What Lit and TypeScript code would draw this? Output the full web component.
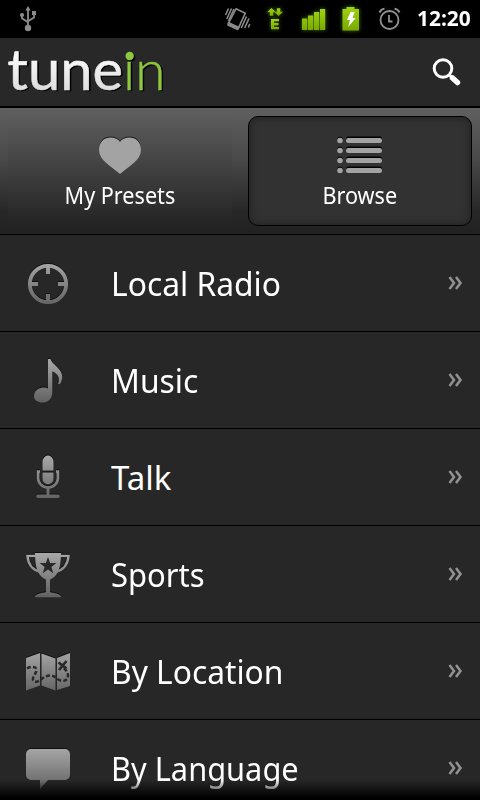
import { LitElement, html, svg, css } from "lit";
import { customElement } from "lit/decorators.js";

const rowGlyphs = {
  target: svg`
    <circle cx="24" cy="24" r="18.2" fill="none" stroke="url(#g)" stroke-width="3.8"/>
    <path d="M22 7h4v7h-4zM22 34h4v7h-4zM7 22h7v4h-7zM34 22h7v4h-7z" fill="url(#g)"/>`,
  note: svg`<path fill="url(#g)" d="M24 2h2.400c1.500 5.500 11.800 9.500 11.800 17.500c0 3-1 5.800-2.400 7.700l-1.600-.5c2.500-7-1.500-10.500-5.900-12.400V35c0 6.500-4.300 10.500-9.600 10.500c-5 0-8.700-2.200-8.700-6.500c0-5 4.500-8.500 9.400-8.500c1.800 0 3.400.3 4.600.9z"/>`,
  mic: svg`
    <path fill="url(#g)" d="M18.500 16.500V8a5.500 6.500 0 0 1 11 0v8.500zM18.500 18.500h11v6a5.500 5.800 0 0 1-11 0z"/>
    <path fill="none" stroke="url(#g)" stroke-width="2.600" d="M16 17.500h-1.900v6.500a9.900 9.500 0 0 0 19.800 0v-6.500h-1.900"/>
    <path fill="url(#g)" d="M22.500 33h3v7.500h8.500a1.800 1.800 0 0 1 0 3.600h-20a1.800 1.800 0 0 1 0-3.600h8.500z"/>`,
  cup: svg`
    <path fill="none" stroke="url(#g)" stroke-width="2.400" d="M12 4.900H3.500C4 12.500 8 19 16 20.500M36 4.900h8.500C44 12.500 40 19 32 20.500"/>
    <path fill="url(#g)" d="M11 2h26v2c-.4 9-1.500 16-5 20c-2 2.500-4.500 4-6 4.500V41c3 1.400 10 .8 11.500 5.200h-27C12 41.800 19 42.400 22 41V28.500c-1.500-.5-4-2-6-4.500c-3.500-4-4.600-11-5-20z"/>
    <path fill="#282828" d="M24 6l2.100 6h6.300l-5 3.900l1.800 6.300l-5.200-3.700l-5.200 3.700l1.800-6.300l-5-3.900h6.300z"/>`,
  map: svg`
    <path fill="url(#g)" d="M2 10l14-5v32.500L2 42.400zM17.500 5.500l14 5v32l-14-5.100zM33 10l13-5v33L33 42z"/>
    <path fill="none" stroke="#282828" stroke-width="2.500" stroke-dasharray="4 2.200" d="M3 20.500c3-2 9-2.500 9.500 1s-4.500 7-3.500 10.500c1.500 3.500 6 1 8-.5c5-4.500 11-5.500 16-1c4 4 11 3 11-3c0-3-2.500-6.500-5.500-8"/>
    <path stroke="#282828" stroke-width="2.700" d="M34.500 14.500l8 6M42.500 13l-7.500 9"/>`,
  bubble: svg`<path fill="url(#g)" d="M7 4h34a5 5 0 0 1 5 5v21a5 5 0 0 1-5 5H24l-8 9v-9H7a5 5 0 0 1-5-5V9a5 5 0 0 1 5-5z"/>`,
};

const categories: [keyof typeof rowGlyphs, string, number][] = [
  ["target", "Local Radio", 0.963],
  ["note", "Music", 0.965],
  ["mic", "Talk", 1.0],
  ["cup", "Sports", 0.938],
  ["map", "By Location", 0.962],
  ["bubble", "By Language", 0.933],
];

@customElement("status-bar")
class StatusBar extends LitElement {
  static styles = css`
    :host { display: flex; align-items: center; height: 38px; background: #000; position: relative; }
    svg { display: block; width: 412px; height: 38px; flex: none; }
    .clock { flex: none; width: 68px; box-sizing: border-box; padding-left: 5px; color: #fff;
      font: 700 20px/38px "Open Sans", "Noto Sans", sans-serif; white-space: nowrap; }
    .clock span { display: inline-block; transform-origin: left; transform: scale(1.045, 1.06); }
    .glow { filter: drop-shadow(0 0 2px #4c7000); }
  `;
  render() {
    return html`
      <svg viewBox="0 0 412 38">
        <defs>
          <linearGradient id="lime" x2="0" y2="1"><stop stop-color="#9fd414"/><stop offset="1" stop-color="#79a900"/></linearGradient>
        </defs>
        <g fill="#8c8c8c" stroke="#8c8c8c">
          <path d="M28 6l2.700 4.500h-5.400z" stroke="none"/>
          <circle cx="28" cy="28" r="3.200" stroke="none"/>
          <circle cx="22" cy="15" r="2.100" stroke="none"/>
          <path d="M32 11h4v4h-4z" stroke="none"/>
          <path fill="none" stroke-width="1.800" d="M28 9v18M22 15v3.200l6 4M34 14v3.500l-6 3.700"/>
        </g>
        <g fill="none" stroke="#8a8a8a" stroke-width="1.600" stroke-linejoin="round">
          <path d="M236 8.800l9.300 4.400l-6.800 14.600l-10-4.600z"/>
          <path fill="#8a8a8a" d="M228.500 22.800l10.300 4.700l-1 2l-9.800-4.400z"/>
          <path d="M228.500 8.500l-3 6.500M231.500 8.500l-4.700 10.500M234 9l-5.500 12M249 18.500l-4.300 9.500M246.500 16.500l-5.200 11.500M249.800 24l-1.500 3.500"/>
        </g>
        <g class="glow" fill="url(#lime)">
          <path d="M271.500 8l4.400 4.300h-2.700v3.500h-3.400v-3.500h-2.700zM276.900 8.200h3.400v3.500h2.600l-4.300 4.400l-4.300-4.400h2.600z"/>
          <path d="M271 19h8v2.200h-5v1.800h4.500v2.200H274v1.900h5V29.300h-8z"/>
          <path d="M302 18.500h5.200v11.500h-5.200zM308 15.500h5.200v14.500h-5.200zM314 12h5.200V30h-5.200zM320 9h5.200v21h-5.200z"/>
          <path d="M346.500 7h8v2h4.500v21.500h-16.500V9h4z"/>
        </g>
        <path d="M350.500 12h4.200l-2.200 6h3.200l-7.500 9l1.700-7h-3z" fill="#fff"/>
        <g fill="none" stroke="#929292" stroke-width="1.800">
          <circle cx="389.500" cy="20" r="9"/>
          <path d="M389 15v6.500h3.500M379.500 12.500c1-2 3-3.500 5-3.800M394.500 8.700c2 .3 4 1.800 5 3.800"/>
        </g>
      </svg>
      <div class="clock"><span>12:20</span></div>`;
  }
}

@customElement("category-row")
class CategoryRow extends LitElement {
  static properties = { glyph: {}, label: {}, stretch: {} };
  declare glyph: keyof typeof rowGlyphs;
  declare label: string;
  declare stretch: number;
  static styles = css`
    :host { display: flex; align-items: center; height: 96px; border-bottom: 1px solid #000;
      background: #272727; padding: 0 17px 0 24px; }
    .icon { width: 48px; height: 48px; flex: none; margin-top: 2px; filter: drop-shadow(0 -1px 0 #111); }
    .label { flex: 1; margin-left: 39px; color: #fff; font: 33px/45px "Noto Sans", sans-serif; padding-top: 1px; white-space: nowrap; }
    .label span { display: inline-block; transform-origin: left; }
    .more { width: 15px; height: 16px; flex: none; }
  `;
  render() {
    return html`
      <svg class="icon" viewBox="0 0 48 48">
        <defs><linearGradient id="g" gradientUnits="userSpaceOnUse" x1="0" y1="2" x2="0" y2="46">
          <stop stop-color="#a8a8a8"/><stop offset="1" stop-color="#616161"/></linearGradient></defs>
        ${rowGlyphs[this.glyph]}
      </svg>
      <div class="label"><span style="transform: scaleX(${this.stretch})">${this.label}</span></div>
      <svg class="more" viewBox="0 0 15 16"><path d="M1.500 2l4.500 6l-4.500 6M8 2l4.500 6l-4.500 6" fill="none" stroke="#929292" stroke-width="2.500"/></svg>`;
  }
}

@customElement("app-root")
class AppRoot extends LitElement {
  static styles = css`
    :host { display: flex; flex-direction: column; width: 480px; height: 800px; overflow: hidden; position: relative;
      background: #272727; font-family: "Noto Sans", sans-serif; }
    status-bar, .header, .tabs, category-row { flex: none; }
    .header { display: flex; align-items: center; justify-content: space-between; height: 68px;
      background: #282828; border-bottom: 2px solid #000; }
    .logo { width: 180px; height: 68px; overflow: visible; }
    .tune { font: 400 56px Lato, sans-serif; stroke-width: .5px; }
    .in { font: 300 56px Lato, sans-serif; stroke-width: .5px; }
    .search { width: 32px; height: 32px; margin-right: 17px; }
    .tabs { display: flex; gap: 16px; height: 127px; box-sizing: border-box; padding: 8px; border-bottom: 1px solid #000;
      background: linear-gradient(#606060, #4b4b4b 38%, #272727 82%, #212121); }
    .tab { width: 224px; height: 110px; box-sizing: border-box; display: flex; flex-direction: column; align-items: center;
      border-radius: 10px; padding-top: 17px; }
    .idle { border-radius: 0; background: linear-gradient(#5c5c5c, #232323); }
    .active { background: #323232; border: 1px solid #000; padding-top: 16px; box-shadow: inset 0 0 7px 1px #222; }
    .tab svg { width: 48px; height: 46px; flex: none; overflow: visible; }
    .tab span { color: #fff; font-size: 23px; line-height: 32px; white-space: nowrap; transform: scaleX(.94); }
    .fade { position: absolute; left: 0; right: 0; bottom: 0; height: 20px; background: linear-gradient(transparent, #000 90%); }
  `;
  render() {
    return html`
      <status-bar></status-bar>
      <div class="header">
        <svg class="logo" viewBox="0 0 180 68">
          <defs>
            <linearGradient id="w" gradientUnits="userSpaceOnUse" x1="0" y1="12" x2="0" y2="54"><stop stop-color="#fff"/><stop offset="1" stop-color="#dcdcdc"/></linearGradient>
          </defs>
          <g fill="#000" stroke="#000" transform="translate(1.500 1.500)">
            <text class="tune" x="7.200" y="51.500" textLength="116" lengthAdjust="spacingAndGlyphs">tune</text>
            <text class="in" x="123" y="51.700" textLength="42.500" lengthAdjust="spacingAndGlyphs">ın</text>
            <circle cx="129.700" cy="18" r="4" stroke="none"/>
          </g>
          <text class="tune" x="7.200" y="51.500" textLength="116" lengthAdjust="spacingAndGlyphs" fill="url(#w)" stroke="url(#w)">tune</text>
          <text class="in" x="123" y="51.700" textLength="42.500" lengthAdjust="spacingAndGlyphs" fill="#8dc63f" stroke="#8dc63f">ın</text>
          <circle cx="129.700" cy="18" r="4.200" fill="#8dc63f"/>
        </svg>
        <svg class="search" viewBox="0 0 32 32">
          <circle cx="12" cy="12.500" r="8.800" fill="none" stroke="#fff" stroke-width="3"/>
          <path d="M18 18.500l3 3" stroke="#fff" stroke-width="3"/>
          <path d="M21.500 22l5 4.500" stroke="#fff" stroke-width="5.500" stroke-linecap="round"/>
        </svg>
      </div>
      <div class="tabs">
        <div class="tab idle">
          <svg viewBox="0 0 48 46">
            <path fill="#1c1c1c" transform="translate(0 -1)" d="M24 9C28 2 45 2 45 17C45 27 34 32.500 24 41C14 32.500 3 27 3 17C3 2 20 2 24 9z"/>
            <path fill="#a3a3a3" d="M24 9C28 2 45 2 45 17C45 27 34 32.500 24 41C14 32.500 3 27 3 17C3 2 20 2 24 9z"/>
          </svg>
          <span>My Presets</span>
        </div>
        <div class="tab active">
          <svg viewBox="0 0 48 46">
            ${[5, 15, 25, 35].map((y) => svg`
              <circle cx="4" cy=${y + 1.5} r="2.800" fill="#000"/><rect x="10" y=${y - 1.5} width="36" height="5.500" rx="2.500" fill="#000"/>
              <circle cx="4" cy=${y + 2.5} r="2.800" fill="#a3a3a3"/><rect x="10" y=${y} width="36" height="5" rx="2.300" fill="#a3a3a3"/>`)}
          </svg>
          <span>Browse</span>
        </div>
      </div>
      ${categories.map(([glyph, label, stretch]) => html`<category-row .glyph=${glyph} .label=${label} .stretch=${stretch}></category-row>`)}
      <div class="fade"></div>`;
  }
}
